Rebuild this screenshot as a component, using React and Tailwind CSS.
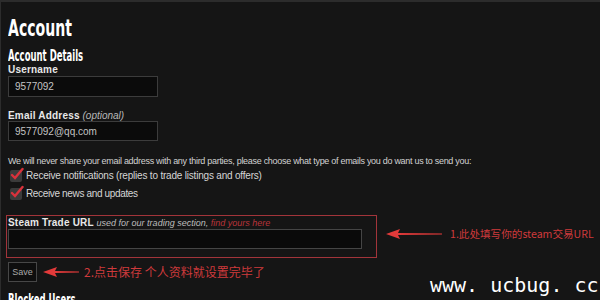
import React from 'react';

const sans = "font-['Liberation_Sans','Noto_Sans_CJK_SC',sans-serif]";
const cjk = "font-['Noto_Sans_CJK_SC','Liberation_Sans',sans-serif]";
const cond = "font-['DejaVu_Sans_Condensed','DejaVu_Sans',sans-serif]";

const Arrow = ({ width }) => (
  <svg width={width} height="10" viewBox={`0 0 ${width} 10`} className="shrink-0">
    <polygon
      points={`0,5 14,0 12,3.9 ${width},4.4 ${width},5.6 12,6.1 14,10`}
      fill="#e23a3a"
    />
  </svg>
);

const Check = ({ label, tight }) => (
  <div className="flex items-center h-[18px]">
    <div className="relative w-[12px] h-[12px] ml-[2px] bg-[#3b3b3b] rounded-[2px] shrink-0">
      <svg width="14" height="14" viewBox="0 0 14 14" className="absolute left-[0px] top-[-3px]">
        <path d="M2 8 L5 11 L12.5 2" stroke="#d8323c" strokeWidth="2.4" fill="none" strokeLinecap="round" />
      </svg>
    </div>
    <span className={`ml-[4px] text-[10px] leading-[12px] text-[#d6d6d6] ${tight ? 'tracking-[-0.35px]' : 'tracking-[-0.2px]'}`}>{label}</span>
  </div>
);

export default function App() {
  return (
    <div className={`relative min-h-[300px] w-full overflow-hidden bg-[#151515] border-t-2 border-l border-[#2c2c2c] ${sans}`}>
      <div className="pl-[7px] pt-[12px]">
        <h1 className={`h-[28px] text-[23px] leading-[28px] font-bold text-white origin-left scale-x-[0.68] ${cond}`}>
          Account
        </h1>
        <h2 className={`mt-[7px] h-[15px] text-[15px] leading-[15px] font-bold text-white origin-left scale-x-[0.63] ${cond}`}>
          Account Details
        </h2>

        <div className="h-[11px] text-[10px] leading-[11px] font-bold text-[#e8e8e8] tracking-[0.2px]">Username</div>
        <div className="mt-[1px] flex items-center h-[21px] w-[150px] border border-[#3c3c3c] bg-[#0b0b0b] pl-[6px] text-[10px] text-[#c4c4c4]">
          9577092
        </div>

        <div className="mt-[13px] h-[11px] text-[10px] leading-[11px] text-[#e8e8e8]">
          <span className="font-bold tracking-[0.2px]">Email Address</span>{' '}
          <span className="italic text-[#b8b8b8]">(optional)</span>
        </div>
        <div className="flex items-center h-[20px] w-[150px] border border-[#3c3c3c] bg-[#0b0b0b] pl-[6px] text-[10px] text-[#c4c4c4]">
          9577092@qq.com
        </div>

        <p className="mt-[15px] h-[11px] text-[9px] leading-[11px] tracking-[-0.29px] text-[#d2d2d2] whitespace-nowrap">
          We will never share your email address with any third parties, please choose what type of emails you do want us to send you:
        </p>

        <Check label="Receive notifications (replies to trade listings and offers)" />
        <Check label="Receive news and updates" tight />

        <div className="mt-[12px] flex items-center">
          <div className="ml-[-2px] w-[371px] h-[43px] border border-[#a2343a] pl-[1px] pt-[1px]">
            <div className="h-[11px] text-[10px] leading-[11px] whitespace-nowrap">
              <span className="font-bold text-[#e8e8e8] tracking-[0.2px]">Steam Trade URL</span>{' '}
              <span className="italic text-[9px] text-[#bdbdbd]">used for our trading section, </span>
              <span className="italic text-[9px] text-[#b8343a]">find yours here</span>
            </div>
            <div className="mt-[1px] h-[20px] w-[354px] border border-[#454545] bg-[#0a0a0a]" />
          </div>
          <div className="ml-[9px] mt-[-5px] flex items-center">
            <Arrow width={56} />
            <span className={`ml-[8px] text-[10.6px] leading-[14px] text-[#cf3a3c] whitespace-nowrap ${cjk}`}>
              1.此处填写你的steam交易URL
            </span>
          </div>
        </div>

        <div className="mt-[4px] flex items-center">
          <button className="w-[29px] h-[20px] border border-[#474747] bg-[#0e0e0e] text-[9px] text-[#a8a8a8] leading-[18px]">
            Save
          </button>
          <div className="ml-[6px] flex items-center">
            <Arrow width={36} />
            <span className={`ml-[5px] text-[12px] leading-[16px] text-[#cf3a3c] whitespace-nowrap ${cjk}`}>
              2.点击保存 个人资料就设置完毕了
            </span>
          </div>
        </div>

        <h2 className={`mt-[11px] h-[15px] text-[15px] leading-[15px] font-bold text-white origin-left scale-x-[0.63] ${cond}`}>
          Blocked Users
        </h2>
      </div>

      <div className="absolute left-[429px] top-[273px] text-[20px] leading-[20px] text-white whitespace-nowrap font-['DejaVu_Sans_Mono',monospace]">
        www. ucbug. cc
      </div>
    </div>
  );
}
